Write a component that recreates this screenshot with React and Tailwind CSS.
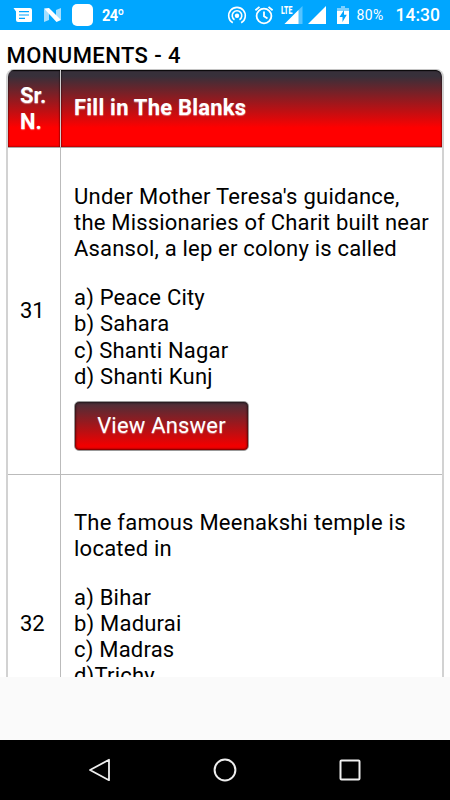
const questions = [
  {
    no: 31,
    lines: [
      { text: "Under Mother Teresa's guidance,", track: "tracking-[0.26px]" },
      { text: "the Missionaries of Charit built near", track: "tracking-[0.2px]" },
      { text: "Asansol, a lep er colony is called", track: "tracking-[0.2px]" },
    ],
    options: ["a) Peace City", "b) Sahara", "c) Shanti Nagar", "d) Shanti Kunj"],
    answer: true,
  },
  {
    no: 32,
    lines: [
      { text: "The famous Meenakshi temple is", track: "tracking-[0.24px]" },
      { text: "located in", track: "tracking-[0.24px]" },
    ],
    options: ["a) Bihar", "b) Madurai", "c) Madras", "d)Trichy"],
    answer: false,
  },
];

function StatusBar() {
  return (
    <div className="flex h-[30px] shrink-0 items-center bg-[#00a6ff] pl-[13px] text-white">
      {/* MESSAGES */}
      <svg className="h-[30px] w-[20px] shrink-0" viewBox="0 0 20 30">
        <path d="M0.500 8H17Q19 8 19 10V20.500Q19 22 17 22H5Q3 22 3 20V11.500Z" fill="#fff" />
        <path d="M6 11.700H16M6 15H16M6 18.300H12" stroke="#00a6ff" strokeWidth="1.200" />
      </svg>

      {/* NOUGAT */}
      <svg className="ml-[10px] h-[30px] w-[19px] shrink-0" viewBox="0 0 19 30">
        <path d="M1 9L6 12V20L1 22ZM13 10L18 8V20L13 18Z" fill="#a5dfff" />
        <path d="M1 8.500L6 8L18 20L13.500 22Z" fill="#fff" />
      </svg>

      <div className="ml-[10px] h-[22px] w-[21px] shrink-0 rounded-[5px] bg-white" />
      <span className="ml-[9px] w-[125px] shrink-0 text-[17px] font-bold leading-[32px] tracking-[-0.8px]">
        <span className="inline-block origin-left scale-x-[0.86]">24º</span>
      </span>

      {/* HOTSPOT */}
      <svg className="h-[30px] w-[20px] shrink-0" viewBox="0 0 20 30" fill="none" stroke="#fff" strokeWidth="1.600">
        <path d="M5.800 22.800A8.300 8.300 0 1 1 14.200 22.800" />
        <path d="M7.500 19.700A4.800 4.800 0 1 1 12.500 19.700" />
        <circle cx="10" cy="15.800" r="2.200" fill="#fff" stroke="none" />
      </svg>

      {/* ALARM */}
      <svg className="ml-[7px] h-[30px] w-[20px] shrink-0" viewBox="0 0 20 30" fill="none" stroke="#fff" strokeWidth="1.800">
        <circle cx="10" cy="16" r="7.400" />
        <path d="M10 11.500V16.200L13.500 18.500M1.400 10.300L5.500 6.900M18.600 10.300L14.500 6.900" />
      </svg>

      {/* LTE SIGNAL */}
      <div className="relative ml-[6px] h-[30px] w-[24px] shrink-0">
        <svg className="h-[30px] w-[24px]" viewBox="0 0 24 30">
          <path d="M4.500 24L22.500 6V24Z" fill="#55c3ff" />
          <path d="M4.500 24L18.500 10V24Z" fill="#fff" />
          <path d="M0 5H12V15H0Z" fill="#00a6ff" />
        </svg>
        <span className="absolute left-[1px] top-[4px] origin-left scale-x-[0.6] text-[11.500px] font-black leading-[12px]">LTE</span>
      </div>

      <svg className="ml-[4px] h-[30px] w-[18px] shrink-0" viewBox="0 0 18 30">
        <path d="M0 24L18 6V24Z" fill="#fff" />
      </svg>

      {/* BATTERY */}
      <svg className="ml-[11px] h-[30px] w-[12px] shrink-0" viewBox="0 0 12 30">
        <path d="M4 6H8V8H12V12H0V8H4Z" fill="#7dd0ff" />
        <path d="M0 11H12V24H0Z" fill="#fff" />
        <path d="M7 10L2.500 17H5.500V22L9.800 14.800H7Z" fill="#00a6ff" />
      </svg>

      <span className="ml-[7.500px] w-[39px] shrink-0 text-[14px] leading-[33px] tracking-[0.4px]">80%</span>
      <span className="text-[17.500px] font-medium leading-[33px] whitespace-nowrap">14:30</span>
    </div>
  );
}

function NavBar() {
  return (
    <div className="flex h-[60px] shrink-0 items-center justify-between bg-black px-[88px]">
      <svg className="h-6 w-6" viewBox="0 0 24 24" fill="none" stroke="#eee" strokeWidth="1.800" strokeLinejoin="round">
        <path d="M2 12L21 1.800V22.200Z" />
      </svg>
      <svg className="h-6 w-6" viewBox="0 0 24 24" fill="none" stroke="#eee" strokeWidth="2">
        <circle cx="12" cy="12" r="10.400" />
      </svg>
      <svg className="h-6 w-6" viewBox="0 0 24 24" fill="none" stroke="#eee" strokeWidth="2">
        <rect x="2.500" y="2.500" width="19" height="19" rx="1" />
      </svg>
    </div>
  );
}

export default function App() {
  return (
    <div className="flex h-[800px] w-[450px] flex-col overflow-hidden bg-[#fafafa] font-['Roboto',sans-serif] text-black">
      <StatusBar />

      {/* PAGE */}
      <div className="h-[647px] shrink-0 overflow-hidden bg-white pl-[6px] pr-[6px]">
        <h1 className="h-[39px] pl-[0.5px] pt-[13px] text-[22px] font-medium leading-[26px] tracking-[0.44px] whitespace-nowrap">
          MONUMENTS - 4
        </h1>

        <div className="overflow-hidden rounded-t-[8px] border-2 border-[#d2d2d2] border-t-[#c4c4c4] border-t-1">
          {/* HEADER */}
          <div className="flex h-[78px] border-b border-[#aaa] text-[22px] font-bold leading-[26px] text-white [text-shadow:0_1px_1px_rgba(255,255,255,0.45)]">
            <div className="flex w-[53px] shrink-0 items-center border-r border-[#d0d0d0] bg-linear-to-b/srgb from-[#37303a] from-8% to-[#ff0000] to-75% pl-[12px] shadow-[inset_0_1px_1px_0_rgba(0,0,0,0.8),inset_0_0_2px_0_rgba(0,0,0,0.8)]">
              <span>Sr.<br />N.</span>
            </div>
            <div className="flex flex-1 items-center rounded-tr-[6px] bg-linear-to-b/srgb from-[#37303a] from-8% to-[#ff0000] to-75% pb-px pl-[13px] tracking-[0.22px] shadow-[inset_0_1px_1px_0_rgba(0,0,0,0.8),inset_0_0_2px_0_rgba(0,0,0,0.8)]">
              Fill in The Blanks
            </div>
          </div>

          {/* QUESTIONS */}
          {questions.map(q => (
            <div key={q.no} className="flex border-b border-[#bbb] text-[22px] leading-[26.200px]">
              <div className={`flex w-[53px] shrink-0 items-center border-r border-[#bbb] pl-[12px] ${q.answer ? "pt-px" : "pb-px"}`}>
                {q.no}
              </div>
              <div className={`flex-1 pl-[13px] ${q.answer ? "pb-[23px] pt-[36px]" : "pb-[85px] pt-[35px]"}`}>
                {q.lines.map(line => (
                  <p key={line.text} className={`whitespace-nowrap ${line.track}`}>{line.text}</p>
                ))}
                <div className="mt-[22.500px]">
                  {q.options.map(option => (
                    <p key={option} className="whitespace-nowrap tracking-[0.2px]">{option}</p>
                  ))}
                </div>
                {q.answer && (
                  <button className="mt-[11px] block h-[50px] w-[175px] rounded-[5px] border border-[#999] bg-linear-to-b/srgb from-[#47303a] to-[#f00000] to-90% text-[22px] leading-[26px] tracking-[0.2px] text-white shadow-[inset_0_0_2px_1px_rgba(0,0,0,0.55)] [text-shadow:0_1px_1px_rgba(255,255,255,0.4)]">
                    View Answer
                  </button>
                )}
              </div>
            </div>
          ))}
        </div>
      </div>

      <div className="flex-1 bg-[#fafafa]" />
      <NavBar />
    </div>
  );
}
